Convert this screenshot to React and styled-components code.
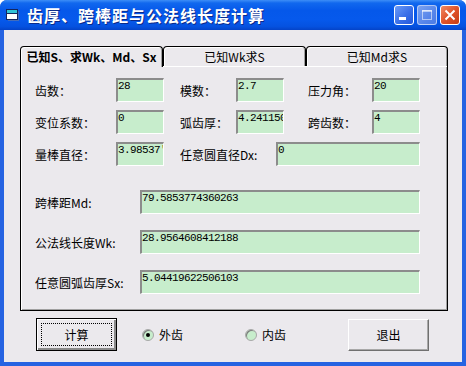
import React from 'react';
import styled, { createGlobalStyle } from 'styled-components';

const GlobalStyle = createGlobalStyle`
  html, body {
    margin: 0;
    padding: 0;
    background: #ffffff;
  }
  body {
    font-family: "Noto Sans CJK SC", "Liberation Sans", sans-serif;
    font-size: 12px;
    color: #000;
  }
`;

const Window = styled.div`
  width: 466px;
  height: 366px;
  display: flex;
  flex-direction: column;
  border-radius: 7px 7px 0 0;
  overflow: hidden;
  background: #0a4fd8;
`;

const TitleBar = styled.div`
  height: 30px;
  flex: none;
  display: flex;
  align-items: center;
  padding: 0 6px;
  background: linear-gradient(
    to bottom,
    #3d8ef7 0%,
    #1168ee 10%,
    #0558ea 35%,
    #0659ec 65%,
    #0552e0 88%,
    #0443c8 100%
  );
`;

const TitleText = styled.div`
  margin-left: 7px;
  color: #fff;
  font-size: 16px;
  font-weight: 700;
  letter-spacing: 1px;
  text-shadow: 1px 1px 0 #0b2a8a;
  line-height: 30px;
`;

const Controls = styled.div`
  margin-left: auto;
  display: flex;
  gap: 3px;
`;

const CtlButton = styled.div`
  width: 20px;
  height: 20px;
  box-sizing: border-box;
  border-radius: 3px;
  border: 1px solid ${(p) => (p.$disabled ? 'rgba(255,255,255,0.55)' : '#ffffff')};
  background: ${(p) =>
    p.$close
      ? 'linear-gradient(135deg, #f08a64 0%, #e0542a 50%, #c53c14 100%)'
      : p.$disabled
      ? 'linear-gradient(135deg, #7aa2f0 0%, #5886ea 60%, #4b7be6 100%)'
      : 'linear-gradient(135deg, #6a9bf7 0%, #3a6fe8 55%, #2458dc 100%)'};
  display: flex;
  align-items: center;
  justify-content: center;
`;

const Body = styled.div`
  flex: 1;
  display: flex;
  flex-direction: column;
  padding: 16px 0 0 16px;
  background: #ebe9ed;
  border: 4px solid #2563e2;
  border-top: none;
`;

const TabStrip = styled.div`
  display: flex;
  align-items: flex-end;
  height: 20px;
`;

const Tab = styled.div`
  position: relative;
  z-index: ${(p) => (p.$active ? 2 : 1)};
  width: ${(p) => p.$w}px;
  height: ${(p) => (p.$active ? 21 : 20)}px;
  margin-bottom: ${(p) => (p.$active ? -1 : 0)}px;
  box-sizing: border-box;
  border: 1px solid #000;
  border-bottom: none;
  border-radius: 4px 4px 0 0;
  background: #ebe9ed;
  box-shadow: inset 1px 1px 0 #ffffff, inset -1px 0 0 #a0a0a0;
  display: flex;
  align-items: center;
  justify-content: center;
  padding-bottom: ${(p) => (p.$active ? 1 : 0)}px;
  font-size: 12px;
  font-weight: ${(p) => (p.$active ? 700 : 400)};
  white-space: nowrap;
`;

const Panel = styled.div`
  width: 428px;
  height: 246px;
  margin-top: -1px;
  box-sizing: border-box;
  border: 1px solid #000;
  box-shadow: inset 1px 1px 0 #ffffff, inset -1px -1px 0 #a0a0a0;
  padding: 12px 0 0 14px;
  display: flex;
  flex-direction: column;
`;

const RowGroup = styled.div`
  display: flex;
  flex-direction: column;
  gap: ${(p) => p.$gap}px;
  margin-top: ${(p) => p.$mt || 0}px;
`;

const Row = styled.div`
  display: flex;
  align-items: center;
  height: 24px;
`;

const Label = styled.div`
  width: ${(p) => p.$w}px;
  margin-left: ${(p) => p.$ml || 0}px;
  flex: none;
  font-size: 12px;
  white-space: nowrap;
`;

const Box = styled.div`
  width: ${(p) => p.$w}px;
  height: 24px;
  flex: none;
  box-sizing: border-box;
  background: #c7edcc;
  border-style: solid;
  border-width: 2px 1px 1px 2px;
  border-color: #8c8c8c #ffffff #ffffff #8c8c8c;
  padding: 1px 0 0 0;
  font-family: "Liberation Mono", "DejaVu Sans Mono", monospace;
  font-size: 11px;
  letter-spacing: -0.6px;
  line-height: 11px;
  white-space: nowrap;
  overflow: hidden;
`;

const BottomBar = styled.div`
  display: flex;
  align-items: center;
  height: 33px;
  margin-top: 7px;
  padding-left: 16px;
`;

const Button = styled.button`
  position: relative;
  width: 81px;
  height: ${(p) => (p.$default ? 33 : 32)}px;
  margin-left: ${(p) => p.$ml || 0}px;
  box-sizing: border-box;
  padding: 0;
  background: #ebe9ed;
  border: 1px solid;
  border-color: ${(p) => (p.$default ? '#000 #000 #000 #000' : '#ffffff #707070 #707070 #ffffff')};
  box-shadow: ${(p) =>
    p.$default
      ? 'inset 1px 1px 0 #ffffff, inset -2px -2px 0 #8a8a8a'
      : 'inset -1px -1px 0 #a8a8a8'};
  font-family: "Noto Sans CJK SC", sans-serif;
  font-size: 12px;
  color: #000;

  &::after {
    content: '';
    display: ${(p) => (p.$default ? 'block' : 'none')};
    position: absolute;
    inset: 4px;
    border: 1px dotted #000;
  }
`;

const RadioOpt = styled.label`
  width: ${(p) => p.$w}px;
  margin-left: ${(p) => p.$ml || 0}px;
  display: flex;
  align-items: center;
  gap: 5px;
  font-size: 12px;
`;

const RadioCircle = styled.span`
  width: 12px;
  height: 12px;
  box-sizing: border-box;
  border-radius: 50%;
  background: #c7edcc;
  border: 1px solid #a8a8a8;
  box-shadow: inset 1px 1px 0 #7c7c7c;
  display: flex;
  align-items: center;
  justify-content: center;

  &::after {
    content: '';
    display: ${(p) => (p.$checked ? 'block' : 'none')};
    width: 4px;
    height: 4px;
    border-radius: 50%;
    background: #000;
  }
`;

const AppIcon = () => (
  <svg width="14" height="13" viewBox="0 0 14 13">
    <rect x="2" y="2" width="11" height="10" fill="#6b7a99" opacity="0.6" />
    <rect x="0.5" y="0.5" width="11" height="10" fill="#ffffff" stroke="#13265e" />
    <rect x="1" y="1" width="10" height="3" fill="#2fc3d6" />
    <line x1="1" y1="4.5" x2="11" y2="4.5" stroke="#13265e" />
  </svg>
);

export default function App() {
  return (
    <>
      <GlobalStyle />
      <Window>
        <TitleBar>
          <AppIcon />
          <TitleText>齿厚、跨棒距与公法线长度计算</TitleText>
          <Controls>
            <CtlButton>
              <svg width="18" height="18" viewBox="0 0 18 18">
                <rect x="4" y="11" width="7" height="3" fill="#fff" />
              </svg>
            </CtlButton>
            <CtlButton $disabled>
              <svg width="18" height="18" viewBox="0 0 18 18">
                <rect x="4.5" y="4.5" width="9" height="9" fill="none" stroke="rgba(255,255,255,0.55)" />
                <rect x="4" y="4" width="10" height="2" fill="rgba(255,255,255,0.55)" />
              </svg>
            </CtlButton>
            <CtlButton $close>
              <svg width="18" height="18" viewBox="0 0 18 18">
                <path d="M4.5 4.5 L13.5 13.5 M13.5 4.5 L4.5 13.5" stroke="#fff" strokeWidth="2" />
              </svg>
            </CtlButton>
          </Controls>
        </TitleBar>
        <Body>
          <TabStrip>
            <Tab $w={143} $active>已知S、求Wk、Md、Sx</Tab>
            <Tab $w={143}>已知Wk求S</Tab>
            <Tab $w={142}>已知Md求S</Tab>
          </TabStrip>
          <Panel>
            <RowGroup $gap={8}>
              <Row>
                <Label $w={81}>齿数：</Label>
                <Box $w={48}>28</Box>
                <Label $w={56} $ml={16}>模数：</Label>
                <Box $w={48}>2.7</Box>
                <Label $w={64} $ml={24}>压力角：</Label>
                <Box $w={48}>20</Box>
              </Row>
              <Row>
                <Label $w={81}>变位系数：</Label>
                <Box $w={48}>0</Box>
                <Label $w={56} $ml={16}>弧齿厚：</Label>
                <Box $w={48}>4.24115008</Box>
                <Label $w={64} $ml={24}>跨齿数：</Label>
                <Box $w={48}>4</Box>
              </Row>
              <Row>
                <Label $w={81}>量棒直径：</Label>
                <Box $w={48}>3.98537'</Box>
                <Label $w={96} $ml={16}>任意圆直径Dx:</Label>
                <Box $w={144}>0</Box>
              </Row>
            </RowGroup>
            <RowGroup $gap={16} $mt={24}>
              <Row>
                <Label $w={105}>跨棒距Md:</Label>
                <Box $w={280}>79.5853774360263</Box>
              </Row>
              <Row>
                <Label $w={105}>公法线长度Wk:</Label>
                <Box $w={280}>28.9564608412188</Box>
              </Row>
              <Row>
                <Label $w={105}>任意圆弧齿厚Sx:</Label>
                <Box $w={280}>5.04419622506103</Box>
              </Row>
            </RowGroup>
          </Panel>
          <BottomBar>
            <Button $default>计算</Button>
            <RadioOpt $w={103} $ml={25}>
              <RadioCircle $checked />
              外齿
            </RadioOpt>
            <RadioOpt $w={103}>
              <RadioCircle />
              内齿
            </RadioOpt>
            <Button>退出</Button>
          </BottomBar>
        </Body>
      </Window>
    </>
  );
}
